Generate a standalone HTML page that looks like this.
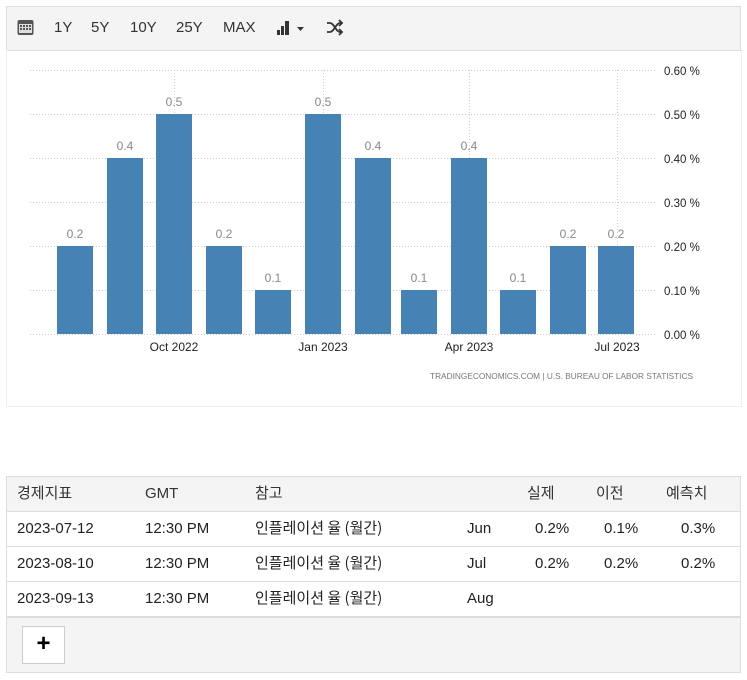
<!DOCTYPE html>
<html><head><meta charset="utf-8"><style>
body{margin:0;background:#fff;font-family:"Liberation Sans","Noto Sans CJK KR",sans-serif;width:747px;height:680px;position:relative;overflow:hidden}
.tb{position:absolute;left:6px;top:6px;width:733px;height:43px;background:#f4f4f4;border:1px solid #ddd}
.tb span{position:absolute;top:12px;font-size:15px;color:#333;line-height:17px}
.ch{position:absolute;left:6px;top:50px;width:734px;height:356px;border:1px solid #eee;border-top:none}
svg text{font-family:"Liberation Sans",sans-serif}
.tbl{position:absolute;left:6px;top:476px;width:733px;height:195px;border:1px solid #ddd;background:#f4f4f4}
.row{position:absolute;left:0;width:733px;height:34px;background:#fff;border-top:1px solid #ddd;font-size:15px;color:#222}
.row span,.hd span{position:absolute;top:8px;line-height:18px;height:18px;overflow:visible}
.hd{position:absolute;left:0;top:0;width:733px;height:34px;font-size:15px;color:#333}
.k{font-family:"Noto Sans CJK KR","Liberation Sans",sans-serif;top:6px!important;line-height:20px!important}
.btn{position:absolute;left:15px;top:149px;width:41px;height:36px;background:#fff;border:1px solid #ccc;font-size:24px;text-align:center;line-height:34px;font-weight:bold}
</style></head><body>
<div class="tb">
<svg style="position:absolute;left:10px;top:12px" width="17" height="17" viewBox="0 0 17 17"><rect x="0.5" y="1" width="16" height="15" rx="2" fill="#555"/><rect x="2" y="5" width="13" height="9" fill="#ddd"/><g fill="#555"><rect x="3" y="6" width="2" height="2"/><rect x="6" y="6" width="2" height="2"/><rect x="9" y="6" width="2" height="2"/><rect x="12" y="6" width="2" height="2"/><rect x="3" y="9" width="2" height="2"/><rect x="6" y="9" width="2" height="2"/><rect x="9" y="9" width="2" height="2"/><rect x="12" y="9" width="2" height="2"/></g></svg>
<span style="left:47px">1Y</span><span style="left:84px">5Y</span><span style="left:123px">10Y</span><span style="left:169px">25Y</span><span style="left:216px">MAX</span>
<svg style="position:absolute;left:269px;top:13px" width="34" height="16"><rect x="1" y="10" width="3" height="5" fill="#333"/><rect x="5" y="6" width="3" height="9" fill="#333"/><rect x="9" y="1" width="4" height="14" fill="#333"/><path d="M21 7h7l-3.5 4z" fill="#333"/></svg>
<svg style="position:absolute;left:319px;top:12px" width="18" height="17" viewBox="0 0 18 17" fill="none" stroke="#333" stroke-width="1.8"><path d="M1 4h3c4 0 6 9 10 9h2M1 13h3c4 0 6-9 10-9h2"/><path d="M13 1l3 3-3 3M13 10l3 3-3 3"/></svg>
</div>
<div class="ch"></div>
<svg style="position:absolute;left:0;top:0" width="747" height="420">
<g stroke="#ccc" stroke-dasharray="1,2"><line x1="30" x2="655" y1="70.5" y2="70.5"/><line x1="30" x2="655" y1="114.5" y2="114.5"/><line x1="30" x2="655" y1="158.5" y2="158.5"/><line x1="30" x2="655" y1="202.5" y2="202.5"/><line x1="30" x2="655" y1="246.5" y2="246.5"/><line x1="30" x2="655" y1="290.5" y2="290.5"/><line x1="30" x2="655" y1="334.5" y2="334.5"/><line x1="174.5" x2="174.5" y1="70" y2="334"/><line x1="323.5" x2="323.5" y1="70" y2="334"/><line x1="469.5" x2="469.5" y1="70" y2="334"/><line x1="617.5" x2="617.5" y1="70" y2="334"/></g>
<g fill="#4682b4"><rect x="57" y="246" width="36" height="88"/><rect x="107" y="158" width="36" height="176"/><rect x="156" y="114" width="36" height="220"/><rect x="206" y="246" width="36" height="88"/><rect x="255" y="290" width="36" height="44"/><rect x="305" y="114" width="36" height="220"/><rect x="355" y="158" width="36" height="176"/><rect x="401" y="290" width="36" height="44"/><rect x="451" y="158" width="36" height="176"/><rect x="500" y="290" width="36" height="44"/><rect x="550" y="246" width="36" height="88"/><rect x="598" y="246" width="36" height="88"/></g>
<g fill="#888" font-size="12" text-anchor="middle"><text x="75" y="238">0.2</text><text x="125" y="150">0.4</text><text x="174" y="106">0.5</text><text x="224" y="238">0.2</text><text x="273" y="282">0.1</text><text x="323" y="106">0.5</text><text x="373" y="150">0.4</text><text x="419" y="282">0.1</text><text x="469" y="150">0.4</text><text x="518" y="282">0.1</text><text x="568" y="238">0.2</text><text x="616" y="238">0.2</text></g>
<g fill="#222" font-size="11.5"><text x="664" y="75">0.60 %</text><text x="664" y="119">0.50 %</text><text x="664" y="163">0.40 %</text><text x="664" y="207">0.30 %</text><text x="664" y="251">0.20 %</text><text x="664" y="295">0.10 %</text><text x="664" y="339">0.00 %</text></g>
<g fill="#222" font-size="12" text-anchor="middle"><text x="174" y="351">Oct 2022</text><text x="323" y="351">Jan 2023</text><text x="469" y="351">Apr 2023</text><text x="617" y="351">Jul 2023</text></g>
<text x="430" y="379" fill="#777" font-size="8.5" textLength="263" lengthAdjust="spacingAndGlyphs">TRADINGECONOMICS.COM | U.S. BUREAU OF LABOR STATISTICS</text>
</svg>
<div class="tbl">
<div class="hd"><span class="k" style="left:10px">경제지표</span><span style="left:138px">GMT</span><span class="k" style="left:248px">참고</span><span class="k" style="left:520px">실제</span><span class="k" style="left:589px">이전</span><span class="k" style="left:659px">예측치</span></div>
<div class="row" style="top:34px"><span style="left:10px">2023-07-12</span><span style="left:138px">12:30 PM</span><span class="k" style="left:248px">인플레이션 율 (월간)</span><span style="left:460px">Jun</span><span style="left:528px">0.2%</span><span style="left:597px">0.1%</span><span style="left:674px">0.3%</span></div>
<div class="row" style="top:69px"><span style="left:10px">2023-08-10</span><span style="left:138px">12:30 PM</span><span class="k" style="left:248px">인플레이션 율 (월간)</span><span style="left:460px">Jul</span><span style="left:528px">0.2%</span><span style="left:597px">0.2%</span><span style="left:674px">0.2%</span></div>
<div class="row" style="top:104px;border-bottom:2px solid #ddd"><span style="left:10px">2023-09-13</span><span style="left:138px">12:30 PM</span><span class="k" style="left:248px">인플레이션 율 (월간)</span><span style="left:460px">Aug</span></div>
<div class="btn">+</div>
</div>
</body></html>
